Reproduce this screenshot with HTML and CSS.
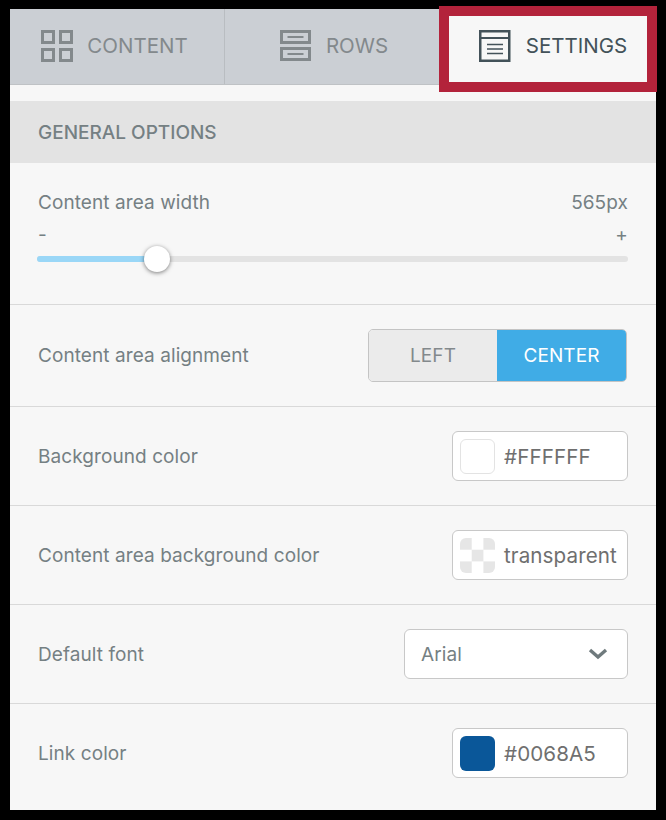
FILE: index.html
```html
<!DOCTYPE html>
<html lang="en">

<head>
 <meta charset="UTF-8">
 <meta name="viewport" content="width=device-width, initial-scale=1.0">
 <title>Settings panel</title>
 <link rel="stylesheet" href="styles.css">
</head>

<body>
 <div class="panel">

  <div class="tabs">
   <div class="tab tab-content">
    <svg class="tab-icon" width="32" height="32" viewBox="0 0 32 32" fill="none" stroke="#83898c" stroke-width="3">
     <rect x="1.5" y="1.5" width="11" height="11" />
     <rect x="19.5" y="1.5" width="11" height="11" />
     <rect x="1.5" y="19.5" width="11" height="11" />
     <rect x="19.5" y="19.5" width="11" height="11" />
    </svg>
    CONTENT
   </div>
   <div class="tab tab-rows">
    <svg class="tab-icon" width="32" height="32" viewBox="0 0 32 32" fill="none" stroke="#83898c">
     <rect x="1.5" y="1.5" width="28" height="11" stroke-width="3" />
     <rect x="1.5" y="18.5" width="28" height="11" stroke-width="3" />
     <path d="M7.5 7h16M7.5 24h16" stroke-width="2" />
    </svg>
    ROWS
   </div>
   <div class="tab tab-settings">
    <svg class="tab-icon" width="32" height="32" viewBox="0 0 32 32" fill="none" stroke="#435259">
     <rect x="1.25" y="1.25" width="29" height="29.5" stroke-width="2.5" />
     <path d="M1 8h30" stroke-width="2" />
     <path d="M8 14.5h16M8 19h16M8 23.5h16" stroke-width="1.6" />
    </svg>
    SETTINGS
   </div>
   <div class="highlight"></div>
  </div>

  <div class="section-title">GENERAL OPTIONS</div>

  <div class="row row-slider">
   <div class="slider-head">
    <span>Content area width</span>
    <span>565px</span>
   </div>
   <div class="slider-marks">
    <span>-</span>
    <span>+</span>
   </div>
   <div class="slider-track">
    <div class="slider-fill" style="width: 20%;"></div>
    <div class="slider-thumb"></div>
   </div>
  </div>

  <div class="row row-toggle">
   <span>Content area alignment</span>
   <div class="toggle">
    <div class="toggle-btn toggle-left">LEFT</div>
    <div class="toggle-btn active">CENTER</div>
   </div>
  </div>

  <div class="row">
   <span>Background color</span>
   <div class="color-box">
    <div class="swatch swatch-white"></div>
    <span class="color-value">#FFFFFF</span>
   </div>
  </div>

  <div class="row">
   <span>Content area background color</span>
   <div class="color-box">
    <div class="swatch swatch-clear"></div>
    <span class="color-value">transparent</span>
   </div>
  </div>

  <div class="row">
   <span>Default font</span>
   <div class="select-box">
    <span>Arial</span>
    <svg width="20" height="12" viewBox="0 0 20 12" fill="none" stroke="#6f7a7d" stroke-width="3.4">
     <path d="M2 2l8 7 8-7" />
    </svg>
   </div>
  </div>

  <div class="row row-last">
   <span>Link color</span>
   <div class="color-box">
    <div class="swatch swatch-blue"></div>
    <span class="color-value">#0068A5</span>
   </div>
  </div>

 </div>
</body>

</html>
```
FILE: styles.css
```css
html {
 background-color: #000;
}

body {
 margin: 0;
 padding: 9px 10px 10px;
 height: 820px;
 box-sizing: border-box;
 overflow: hidden;
 font-family: Inter, "Liberation Sans", sans-serif;
 font-size: 19px;
 letter-spacing: 0.08px;
 color: #758083;
}

.panel {
 width: 646px;
 height: 801px;
 background-color: #f7f7f7;
}

.tabs {
 display: flex;
 position: relative;
 height: 76px;
 box-sizing: border-box;
 background-color: #cbcfd4;
 border-bottom: 1px solid #bfc2c5;
}

.tab {
 display: flex;
 align-items: center;
 justify-content: center;
 gap: 14px;
 box-sizing: border-box;
 padding-bottom: 3px;
 font-size: 20.5px;
 letter-spacing: 0;
 color: #83898c;
}

.tab-icon {
 margin-top: 2px;
}

.tab-content {
 width: 215px;
 padding-right: 5px;
 border-right: 1px solid #b9bdc1;
}

.tab-rows {
 width: 214px;
 padding-left: 4px;
}

.tab-settings {
 flex: 1;
 padding-left: 11px;
 gap: 15px;
 color: #435259;
 background-color: #f7f7f7;
}

.highlight {
 position: absolute;
 top: -3px;
 right: -1px;
 width: 218px;
 height: 86px;
 box-sizing: border-box;
 border: 10px solid #b3233b;
}

.section-title {
 margin-top: 16px;
 height: 62px;
 padding-left: 28px;
 line-height: 63px;
 background-color: #e3e3e3;
 font-weight: 500;
 letter-spacing: 0;
}

.row {
 display: flex;
 align-items: center;
 justify-content: space-between;
 height: 99px;
 box-sizing: border-box;
 padding: 0 28px;
 border-bottom: 1px solid #d9d9d9;
}

.row-last {
 border-bottom-color: transparent;
}

.row-toggle {
 height: 102px;
}

.row-slider {
 display: block;
 height: 142px;
 padding-top: 28px;
}

.slider-head,
.slider-marks {
 display: flex;
 justify-content: space-between;
}

.slider-head {
 line-height: 23px;
}

.slider-marks {
 margin-top: 11px;
 font-size: 19px;
 line-height: 20px;
}

.slider-track {
 position: relative;
 height: 6px;
 margin: 11px 0 0 -1px;
 border-radius: 3px;
 background-color: #e3e3e3;
}

.slider-fill {
 height: 6px;
 border-radius: 3px;
 background-color: #9ad7f7;
}

.slider-thumb {
 position: absolute;
 top: -10px;
 left: 107px;
 width: 26px;
 height: 26px;
 border-radius: 50%;
 background-color: #fff;
 box-shadow: 0 1px 4px rgba(0, 0, 0, 0.5);
}

.toggle {
 display: flex;
 width: 259px;
 height: 53px;
 box-sizing: border-box;
 border: 1px solid #c4c4c4;
 border-radius: 5px;
 overflow: hidden;
 margin-right: 1px;
}

.toggle-btn {
 flex: 1;
 line-height: 51px;
 text-align: center;
 background-color: #ebebeb;
 color: #83898c;
}

.toggle-left {
 flex: none;
 width: 128px;
}

.toggle-btn.active {
 background-color: #40ace6;
 color: #fff;
}

.color-box {
 display: flex;
 align-items: center;
 gap: 9px;
 width: 176px;
 height: 50px;
 box-sizing: border-box;
 padding-left: 7px;
 border: 1px solid #c8c8c8;
 border-radius: 6px;
 background-color: #fff;
}

.color-value {
 color: #6f6f6f;
 font-size: 20.6px;
 letter-spacing: 0.1px;
}

.swatch {
 width: 35px;
 height: 35px;
 box-sizing: border-box;
 border-radius: 6px;
}

.swatch-white {
 background-color: #fff;
 border: 1px solid #e3e3e3;
}

.swatch-clear {
 background-color: #fff;
 background-image: conic-gradient(#fff 25%, #e6e6e6 25% 50%, #fff 50% 75%, #e6e6e6 75%);
 background-size: 23.4px 23.4px;
}

.swatch-blue {
 background-color: #0a5799;
}

.select-box {
 display: flex;
 align-items: center;
 justify-content: space-between;
 width: 224px;
 height: 50px;
 box-sizing: border-box;
 padding: 0 19px 0 16px;
 border: 1px solid #c8c8c8;
 border-radius: 6px;
 background-color: #fff;
}
```
